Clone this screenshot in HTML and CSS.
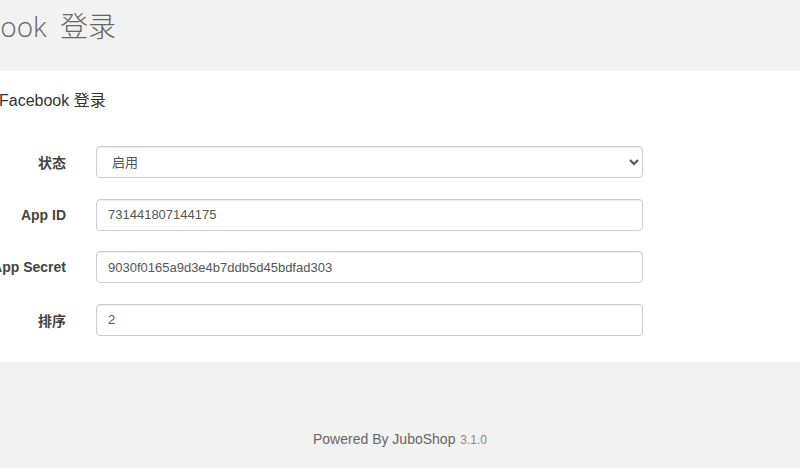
FILE: index.html
```html
<!DOCTYPE html>
<html>
  <head>
    <meta charset="UTF-8">
    <title>Facebook 登录</title>
    <link rel="stylesheet" href="styles.css">
  </head>
  <body>
    <div class="wrapper">
      <div class="page-header">
        <h1>Facebook 登录</h1>
      </div>
      <div class="panel">
        <div class="panel-heading">Facebook 登录</div>
        <form class="form-horizontal" id="facebook-form">
          <div class="form-group">
            <label for="fb-status">状态</label>
            <select id="fb-status" name="fb-status" class="form-control">
              <option value="1" selected>启用</option>
              <option value="0">停用</option>
            </select>
          </div>
          <div class="form-group">
            <label for="fb-app-id">App ID</label>
            <input type="text" id="fb-app-id" name="fb-app-id" class="form-control" value="731441807144175">
          </div>
          <div class="form-group">
            <label for="fb-app-secret">App Secret</label>
            <input type="text" id="fb-app-secret" name="fb-app-secret" class="form-control" value="9030f0165a9d3e4b7ddb5d45bdfad303">
          </div>
          <div class="form-group">
            <label for="fb-sort">排序</label>
            <input type="text" id="fb-sort" name="fb-sort" class="form-control" value="2">
          </div>
        </form>
      </div>
      <div class="footer">
        Powered By JuboShop <span class="version">3.1.0</span>
      </div>
    </div>
  </body>
</html>
```

FILE: styles.css
```css
html, body {
  margin: 0;
  padding: 0;
}
body {
  font-family: "Liberation Sans", "Noto Sans CJK SC", sans-serif;
  background-color: #f2f2f2;
  color: #333;
  overflow: hidden;
}
.wrapper {
  margin-left: -15px;
}
.page-header {
  height: 71px;
  box-sizing: border-box;
  padding-top: 7px;
}
.page-header h1 {
  margin: 0 0 0 -59px;
  font-family: "Open Sans", "Noto Sans CJK SC", sans-serif;
  font-size: 28px;
  font-weight: 300;
  line-height: 38px;
  color: #666;
  white-space: nowrap;
  word-spacing: 6px;
}
.panel {
  background-color: #fff;
  padding: 20px 0 26px;
}
.panel-heading {
  padding-left: 14px;
  font-size: 16px;
  line-height: 20px;
  color: #333;
  margin-bottom: 35px;
  white-space: nowrap;
}
.form-group {
  display: grid;
  grid-template-columns: 81px 547px;
  column-gap: 30px;
  align-items: center;
  margin-bottom: 20.5px;
}
.form-group:last-child {
  margin-bottom: 0;
}
.form-group label {
  text-align: right;
  font-size: 14px;
  font-weight: bold;
  color: #444;
  white-space: nowrap;
}
.form-control {
  box-sizing: border-box;
  width: 100%;
  height: 32px;
  padding: 0 11px;
  font-family: "Liberation Sans", "Noto Sans CJK SC", sans-serif;
  font-size: 13px;
  color: #555;
  background-color: #fff;
  border: 1px solid #ccc;
  border-radius: 4px;
  box-shadow: inset 0 1px 1px rgba(0, 0, 0, 0.075);
}
.footer {
  text-align: center;
  padding-top: 69px;
  padding-left: 15px;
  font-size: 14px;
  color: #666;
}
.footer .version {
  font-size: 12px;
  color: #888;
  margin-left: 1px;
}
```
